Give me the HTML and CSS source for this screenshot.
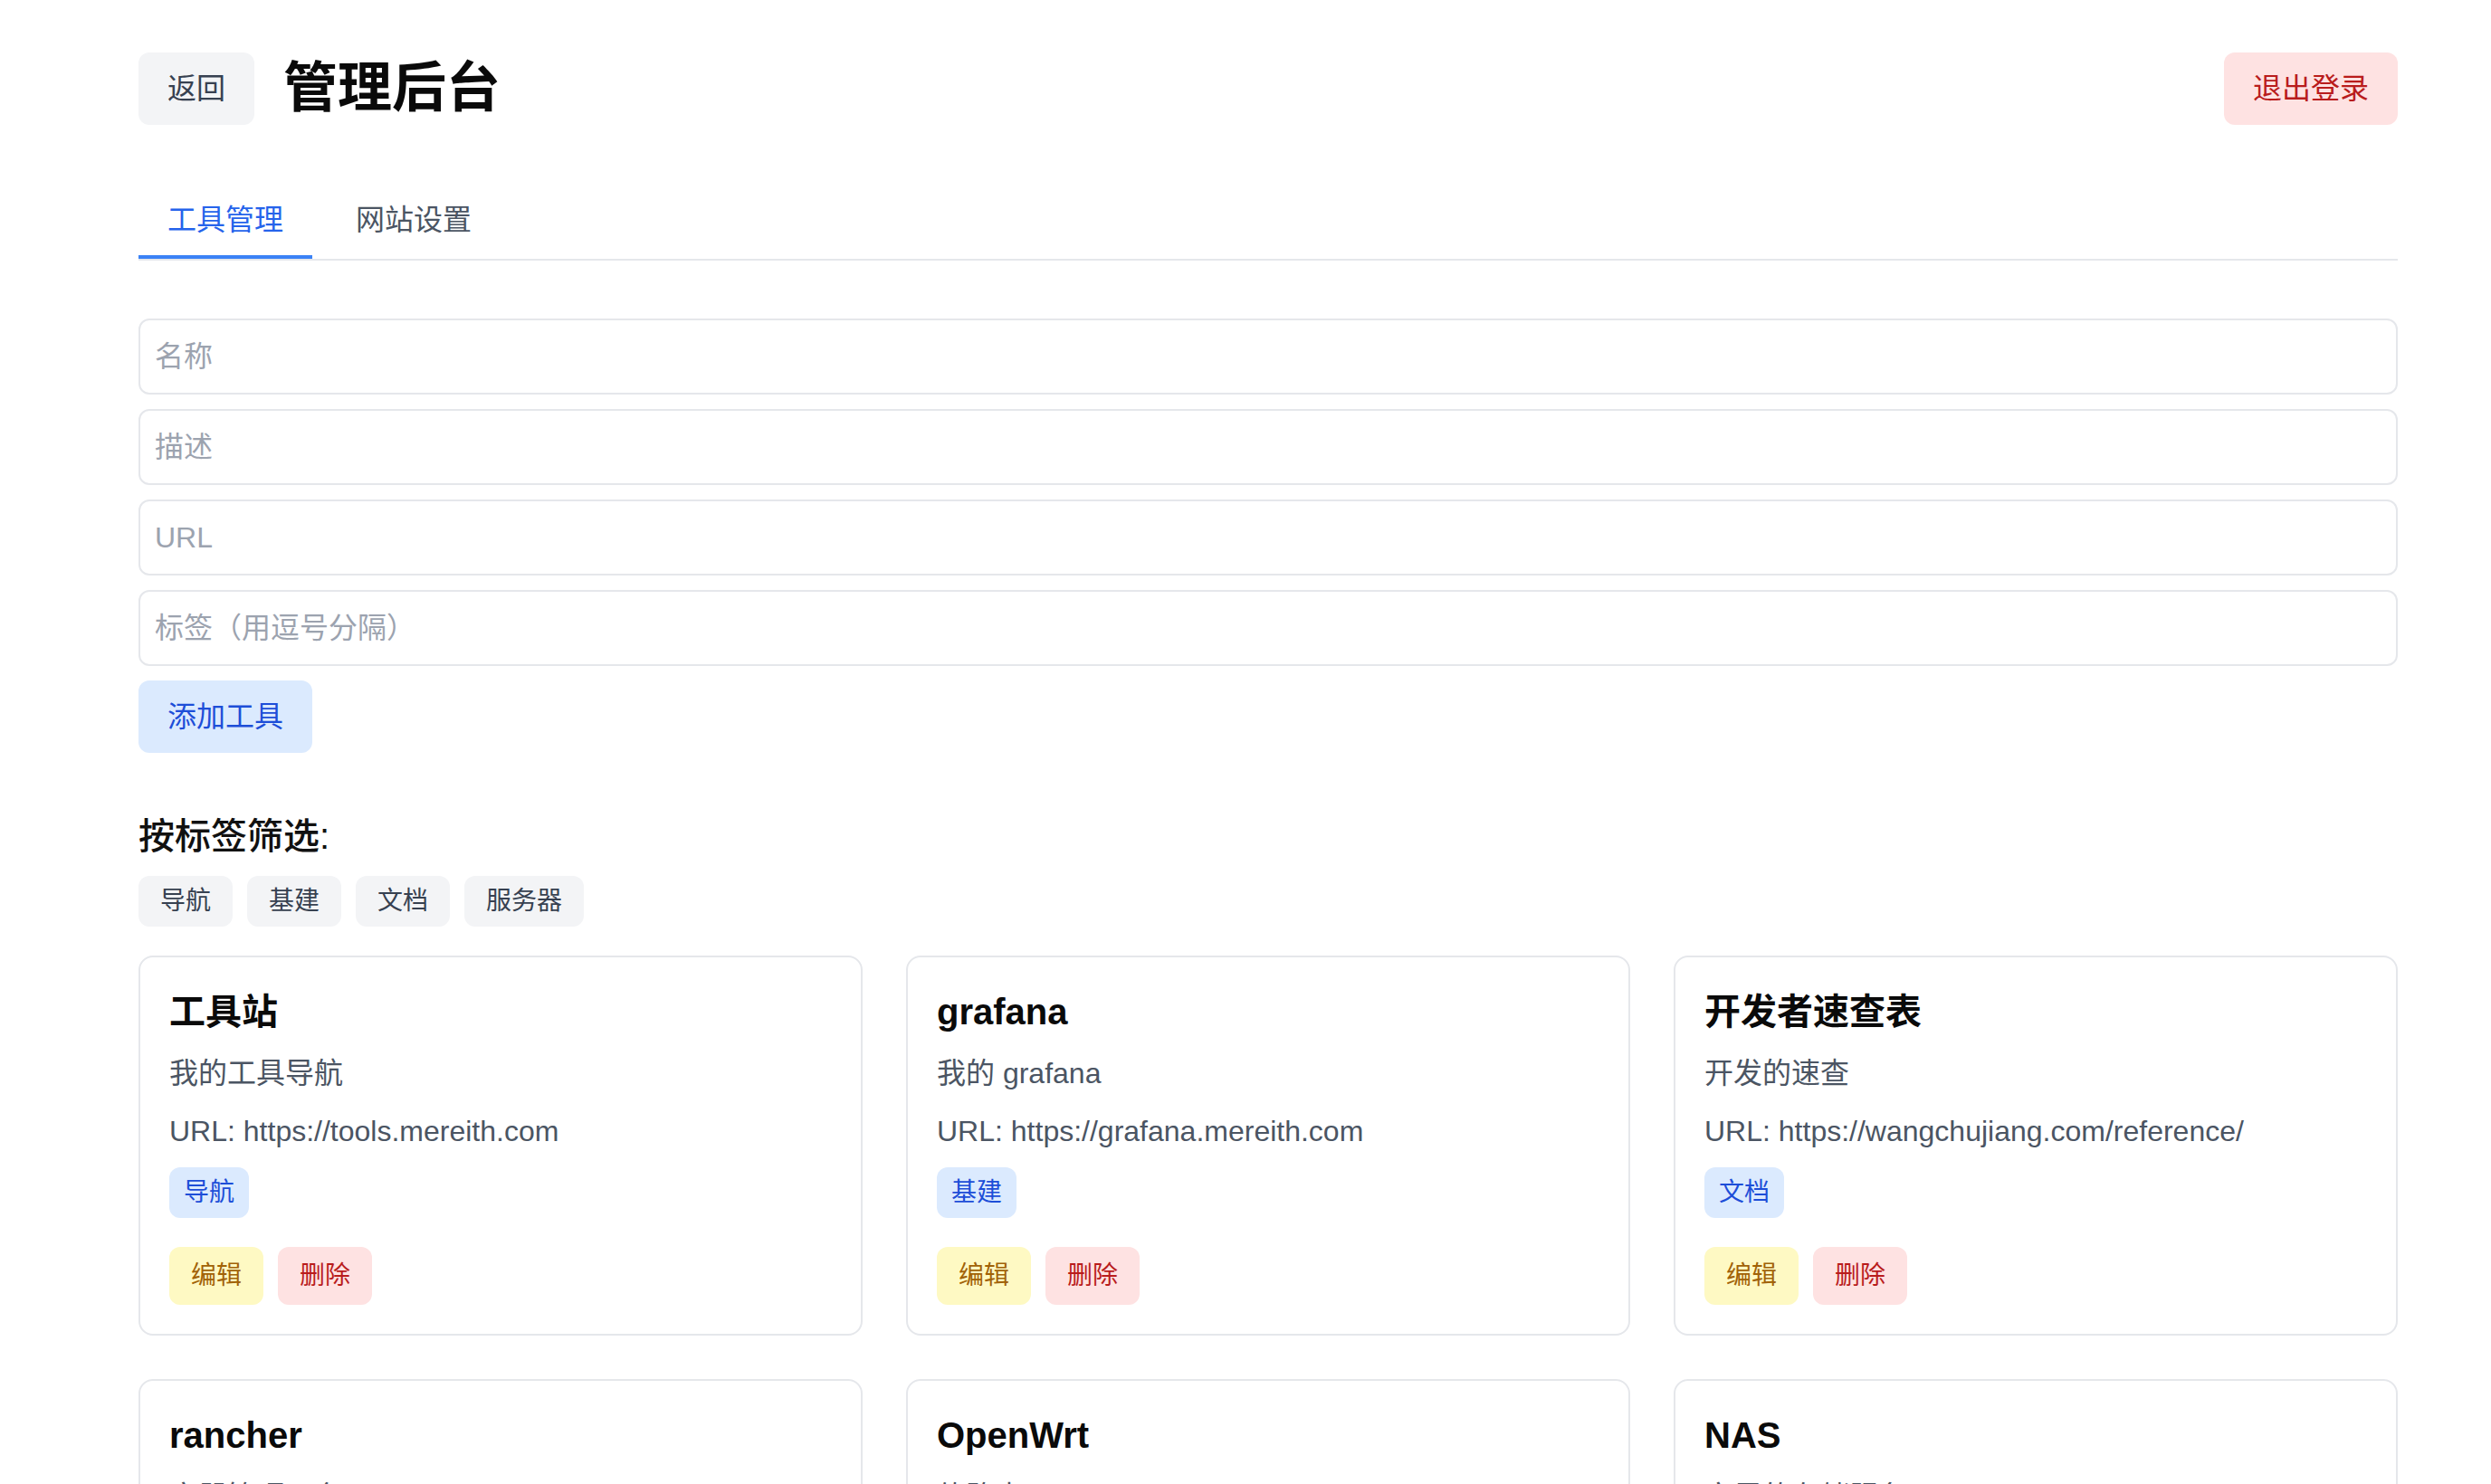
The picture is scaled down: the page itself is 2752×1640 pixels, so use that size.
FILE: index.html
```html
<!DOCTYPE html>
<html lang="zh-CN">
<head>
<meta charset="utf-8">
<title>管理后台</title>
<link rel="stylesheet" href="styles.css">
</head>
<body>
<div class="page">
  <header class="header">
    <div class="header-left">
      <button class="btn btn-back">返回</button>
      <h1 class="title">管理后台</h1>
    </div>
    <button class="btn btn-logout">退出登录</button>
  </header>

  <nav class="tabs">
    <button class="tab tab-active">工具管理</button>
    <button class="tab">网站设置</button>
  </nav>

  <form class="form">
    <input class="input" type="text" placeholder="名称">
    <input class="input" type="text" placeholder="描述">
    <input class="input" type="text" placeholder="URL">
    <input class="input" type="text" placeholder="标签（用逗号分隔）">
    <button type="button" class="btn btn-add">添加工具</button>
  </form>

  <h2 class="filter-title">按标签筛选:</h2>
  <div class="filters">
    <span class="chip">导航</span>
    <span class="chip">基建</span>
    <span class="chip">文档</span>
    <span class="chip">服务器</span>
  </div>

  <div class="cards">
    <div class="card">
      <h3 class="card-title">工具站</h3>
      <p class="card-desc">我的工具导航</p>
      <p class="card-url">URL: https://tools.mereith.com</p>
      <div class="card-tags"><span class="tag">导航</span></div>
      <div class="card-actions"><button class="act act-edit">编辑</button><button class="act act-del">删除</button></div>
    </div>
    <div class="card">
      <h3 class="card-title">grafana</h3>
      <p class="card-desc">我的 grafana</p>
      <p class="card-url">URL: https://grafana.mereith.com</p>
      <div class="card-tags"><span class="tag">基建</span></div>
      <div class="card-actions"><button class="act act-edit">编辑</button><button class="act act-del">删除</button></div>
    </div>
    <div class="card">
      <h3 class="card-title">开发者速查表</h3>
      <p class="card-desc">开发的速查</p>
      <p class="card-url">URL: https://wangchujiang.com/reference/</p>
      <div class="card-tags"><span class="tag">文档</span></div>
      <div class="card-actions"><button class="act act-edit">编辑</button><button class="act act-del">删除</button></div>
    </div>
    <div class="card">
      <h3 class="card-title">rancher</h3>
      <p class="card-desc">容器管理平台</p>
      <p class="card-url">URL: https://rancher.mereith.com</p>
      <div class="card-tags"><span class="tag">基建</span></div>
      <div class="card-actions"><button class="act act-edit">编辑</button><button class="act act-del">删除</button></div>
    </div>
    <div class="card">
      <h3 class="card-title">OpenWrt</h3>
      <p class="card-desc">软路由</p>
      <p class="card-url">URL: http://openwrt.lan</p>
      <div class="card-tags"><span class="tag">服务器</span></div>
      <div class="card-actions"><button class="act act-edit">编辑</button><button class="act act-del">删除</button></div>
    </div>
    <div class="card">
      <h3 class="card-title">NAS</h3>
      <p class="card-desc">家里的存储服务</p>
      <p class="card-url">URL: http://nas.lan</p>
      <div class="card-tags"><span class="tag">服务器</span></div>
      <div class="card-actions"><button class="act act-edit">编辑</button><button class="act act-del">删除</button></div>
    </div>
  </div>
</div>
</body>
</html>
```

FILE: styles.css
```css
* {
  box-sizing: border-box;
}

html, body {
  margin: 0;
  padding: 0;
  background: #ffffff;
}

body {
  font-family: "Liberation Sans", "Noto Sans CJK SC", sans-serif;
  font-size: 32px;
  line-height: 48px;
  color: #111827;
}

.page {
  width: 2496px;
  margin: 58px 0 0 153px;
}

.btn {
  font-family: inherit;
  font-size: 32px;
  line-height: 48px;
  padding: 16px 32px;
  border: none;
  border-radius: 12px;
  cursor: pointer;
}

.header {
  display: flex;
  justify-content: space-between;
  align-items: center;
  height: 80px;
  margin-bottom: 64px;
}

.header-left {
  display: flex;
  align-items: center;
}

.btn-back {
  background: #f3f4f6;
  color: #374151;
}

.title {
  margin: 0 0 0 32px;
  font-size: 60px;
  line-height: 72px;
  font-weight: 700;
  color: #0a0a0a;
}

.btn-logout {
  background: #fee2e2;
  color: #b91c1c;
}

.tabs {
  display: flex;
  gap: 16px;
  border-bottom: 2px solid #e5e7eb;
  margin-bottom: 64px;
}

.tab {
  font-family: inherit;
  font-size: 32px;
  line-height: 48px;
  background: none;
  border: none;
  border-bottom: 4px solid transparent;
  padding: 17px 32px 15px;
  color: #4b5563;
}

.tab-active {
  color: #2563eb;
  border-bottom-color: #3b82f6;
}

.form {
  display: flex;
  flex-direction: column;
  align-items: flex-start;
  gap: 16px;
}

.input {
  width: 100%;
  height: 84px;
  padding: 16px;
  border: 2px solid #e5e7eb;
  border-radius: 12px;
  font-family: inherit;
  font-size: 32px;
  line-height: 48px;
  color: #111827;
  outline: none;
}

.input::placeholder {
  color: #9ca3af;
}

.btn-add {
  background: #dbeafe;
  color: #1d4ed8;
}

.filter-title {
  margin: 64px 0 16px;
  font-size: 40px;
  line-height: 56px;
  font-weight: 500;
  color: #111111;
}

.filters {
  display: flex;
  gap: 16px;
  margin-bottom: 32px;
}

.chip {
  font-size: 28px;
  line-height: 40px;
  padding: 8px 24px;
  border-radius: 12px;
  background: #f3f4f6;
  color: #374151;
}

.cards {
  display: grid;
  grid-template-columns: repeat(3, 1fr);
  gap: 48px;
}

.card {
  border: 2px solid #e5e7eb;
  border-radius: 16px;
  padding: 32px;
  background: #ffffff;
}

.card-title {
  margin: 0 0 16px;
  font-size: 40px;
  line-height: 56px;
  font-weight: 700;
  color: #0a0a0a;
}

.card-desc,
.card-url {
  margin: 0 0 16px;
  font-size: 32px;
  line-height: 48px;
  color: #4b5563;
}

.card-tags {
  display: flex;
  gap: 16px;
}

.tag {
  font-size: 28px;
  line-height: 40px;
  padding: 8px 16px;
  border-radius: 12px;
  background: #dbeafe;
  color: #1d4ed8;
}

.card-actions {
  display: flex;
  gap: 16px;
  margin-top: 32px;
}

.act {
  font-family: inherit;
  font-size: 28px;
  line-height: 40px;
  padding: 12px 24px;
  border: none;
  border-radius: 12px;
}

.act-edit {
  background: #fef9c3;
  color: #a16207;
}

.act-del {
  background: #fee2e2;
  color: #b91c1c;
}
```
